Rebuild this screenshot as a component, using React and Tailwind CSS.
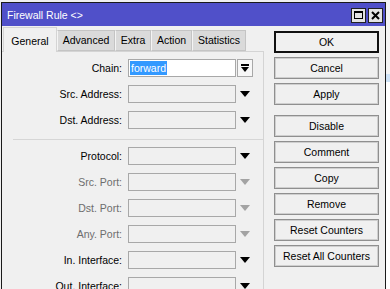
import React from "react";

const font = { fontFamily: '"Liberation Sans", Arial, sans-serif' };

function Arrow({ disabled }) {
  return (
    <svg width="10" height="6" viewBox="0 0 10 6" className="block">
      <polygon points="0,0 10,0 5,6" fill={disabled ? "#a3a3a3" : "#000"} />
    </svg>
  );
}

function Row({ label, disabled, children, arrow = true, className = "" }) {
  return (
    <div className={`flex items-center h-[18px] ${className}`}>
      <div
        className={`w-[121px] text-right text-[10.5px] leading-none pr-[1px] ${
          disabled ? "text-[#6d6d6d]" : "text-black"
        }`}
      >
        {label}
      </div>
      <div className="ml-[5px] w-[108px] h-[18px] border border-[#a8a8a8] bg-[#f0f0f0]">
        {children}
      </div>
      {arrow && (
        <div className="w-[17px] flex justify-center">
          <Arrow disabled={disabled} />
        </div>
      )}
    </div>
  );
}

function Btn({ children, def, className = "" }) {
  return (
    <div
      className={`h-[22px] flex items-center justify-center pt-px text-[10.5px] text-black bg-[#f0f0f0] ${
        def
          ? "border-2 border-[#111]"
          : "border border-[#8f8f8f] shadow-[inset_0_0_0_1px_#cfcfcf]"
      } ${className}`}
    >
      {children}
    </div>
  );
}

export default function App() {
  return (
    <div
      className="w-[390px] h-[289px] overflow-hidden bg-[#f0f0f0] flex"
      style={font}
    >
      <div className="ml-px mt-[2px] w-[385px] h-[300px] border-x border-t border-[#1a1a1a] bg-[#f0f0f0] flex flex-col">
        {/* title bar */}
        <div className="h-[23px] bg-[#5050c9] flex items-center pl-[5px] pr-[2px]">
          <span className="text-white text-[10.5px] leading-none mt-[1px]">
            Firewall Rule &lt;&gt;
          </span>
          <div className="ml-auto flex gap-[2px] mt-[1px]">
            <div className="w-[15px] h-[15px] border border-[#222] bg-[#e4e4e4] flex items-center justify-center">
              <div className="w-[9px] h-[8px] border border-black border-t-2" />
            </div>
            <div className="w-[15px] h-[15px] border border-[#222] bg-[#e4e4e4] flex items-center justify-center">
              <svg width="9" height="9" viewBox="0 0 9 9">
                <path d="M1 1 L8 8 M8 1 L1 8" stroke="#000" strokeWidth="2" />
              </svg>
            </div>
          </div>
        </div>

        {/* body */}
        <div className="flex flex-1">
          {/* left column */}
          <div className="w-[262px] pt-[1px] flex flex-col">
            <div className="flex items-end h-[24px] pl-[1px] text-[10.5px]">
              <div className="relative z-10 w-[54px] h-[25px] -mb-px bg-[#f0f0f0] border-x border-t border-[#d4d4d4] flex items-start justify-center pt-[6px] text-black">
                General
              </div>
              <div className="w-[58px] h-[21px] bg-[#dadada] border border-[#c4c4c4] border-l-[#f4f4f4] flex items-center justify-center text-black">
                Advanced
              </div>
              <div className="w-[36px] h-[21px] bg-[#dadada] border border-[#c4c4c4] border-l-[#f4f4f4] flex items-center justify-center text-black">
                Extra
              </div>
              <div className="w-[41px] h-[21px] bg-[#dadada] border border-[#c4c4c4] border-l-[#f4f4f4] flex items-center justify-center text-black">
                Action
              </div>
              <div className="w-[54px] h-[21px] bg-[#dadada] border border-[#c4c4c4] border-l-[#f4f4f4] flex items-center justify-center text-black">
                Statistics
              </div>
            </div>
            <div className="flex-1 border-t border-r border-[#d4d4d4] pt-[7px] flex flex-col">
              <div className="flex items-center h-[18px]">
                <div className="w-[121px] text-right text-[10.5px] leading-none pr-[1px] text-black">
                  Chain:
                </div>
                <div className="ml-[5px] w-[108px] h-[18px] border border-[#a8a8a8] bg-white flex items-center pl-[1px]">
                  <span className="bg-[#3399ff] text-white text-[10.5px] leading-[14px] px-[1px]">
                    forward
                  </span>
                </div>
                <div className="ml-px w-[16px] h-[18px] border border-[#a8a8a8] bg-[#f7f7f7] flex flex-col items-center justify-center gap-[1px]">
                  <div className="w-[8px] h-[2px] bg-black" />
                  <svg width="8" height="5" viewBox="0 0 8 5" className="block">
                    <polygon points="0,0 8,0 4,5" fill="#000" />
                  </svg>
                </div>
              </div>
              <Row label="Src. Address:" className="mt-[8px]" />
              <Row label="Dst. Address:" className="mt-[8px]" />
              <div className="mt-[10px] ml-[11px] h-px bg-[#d6d6d6]" />
              <Row label="Protocol:" className="mt-[7px]" />
              <Row label="Src. Port:" disabled className="mt-[8px]" />
              <Row label="Dst. Port:" disabled className="mt-[8px]" />
              <Row label="Any. Port:" disabled className="mt-[8px]" />
              <Row label="In. Interface:" className="mt-[8px]" />
              <Row label="Out. Interface:" className="mt-[8px]" />
            </div>
          </div>

          {/* right column */}
          <div className="ml-[10px] w-[105px] pt-[5px] flex flex-col gap-[4px]">
            <Btn def>OK</Btn>
            <Btn>Cancel</Btn>
            <Btn>Apply</Btn>
            <Btn className="mt-[6px]">Disable</Btn>
            <Btn>Comment</Btn>
            <Btn>Copy</Btn>
            <Btn>Remove</Btn>
            <Btn>Reset Counters</Btn>
            <Btn>Reset All Counters</Btn>
          </div>
        </div>
      </div>
      <div className="flex-1 bg-white flex flex-col">
        <div className="h-[74px] bg-[#f4f4f4]" />
        <div className="h-[8px] bg-[#cfe3f7]" />
        <div className="flex-1 bg-white" />
      </div>
    </div>
  );
}
